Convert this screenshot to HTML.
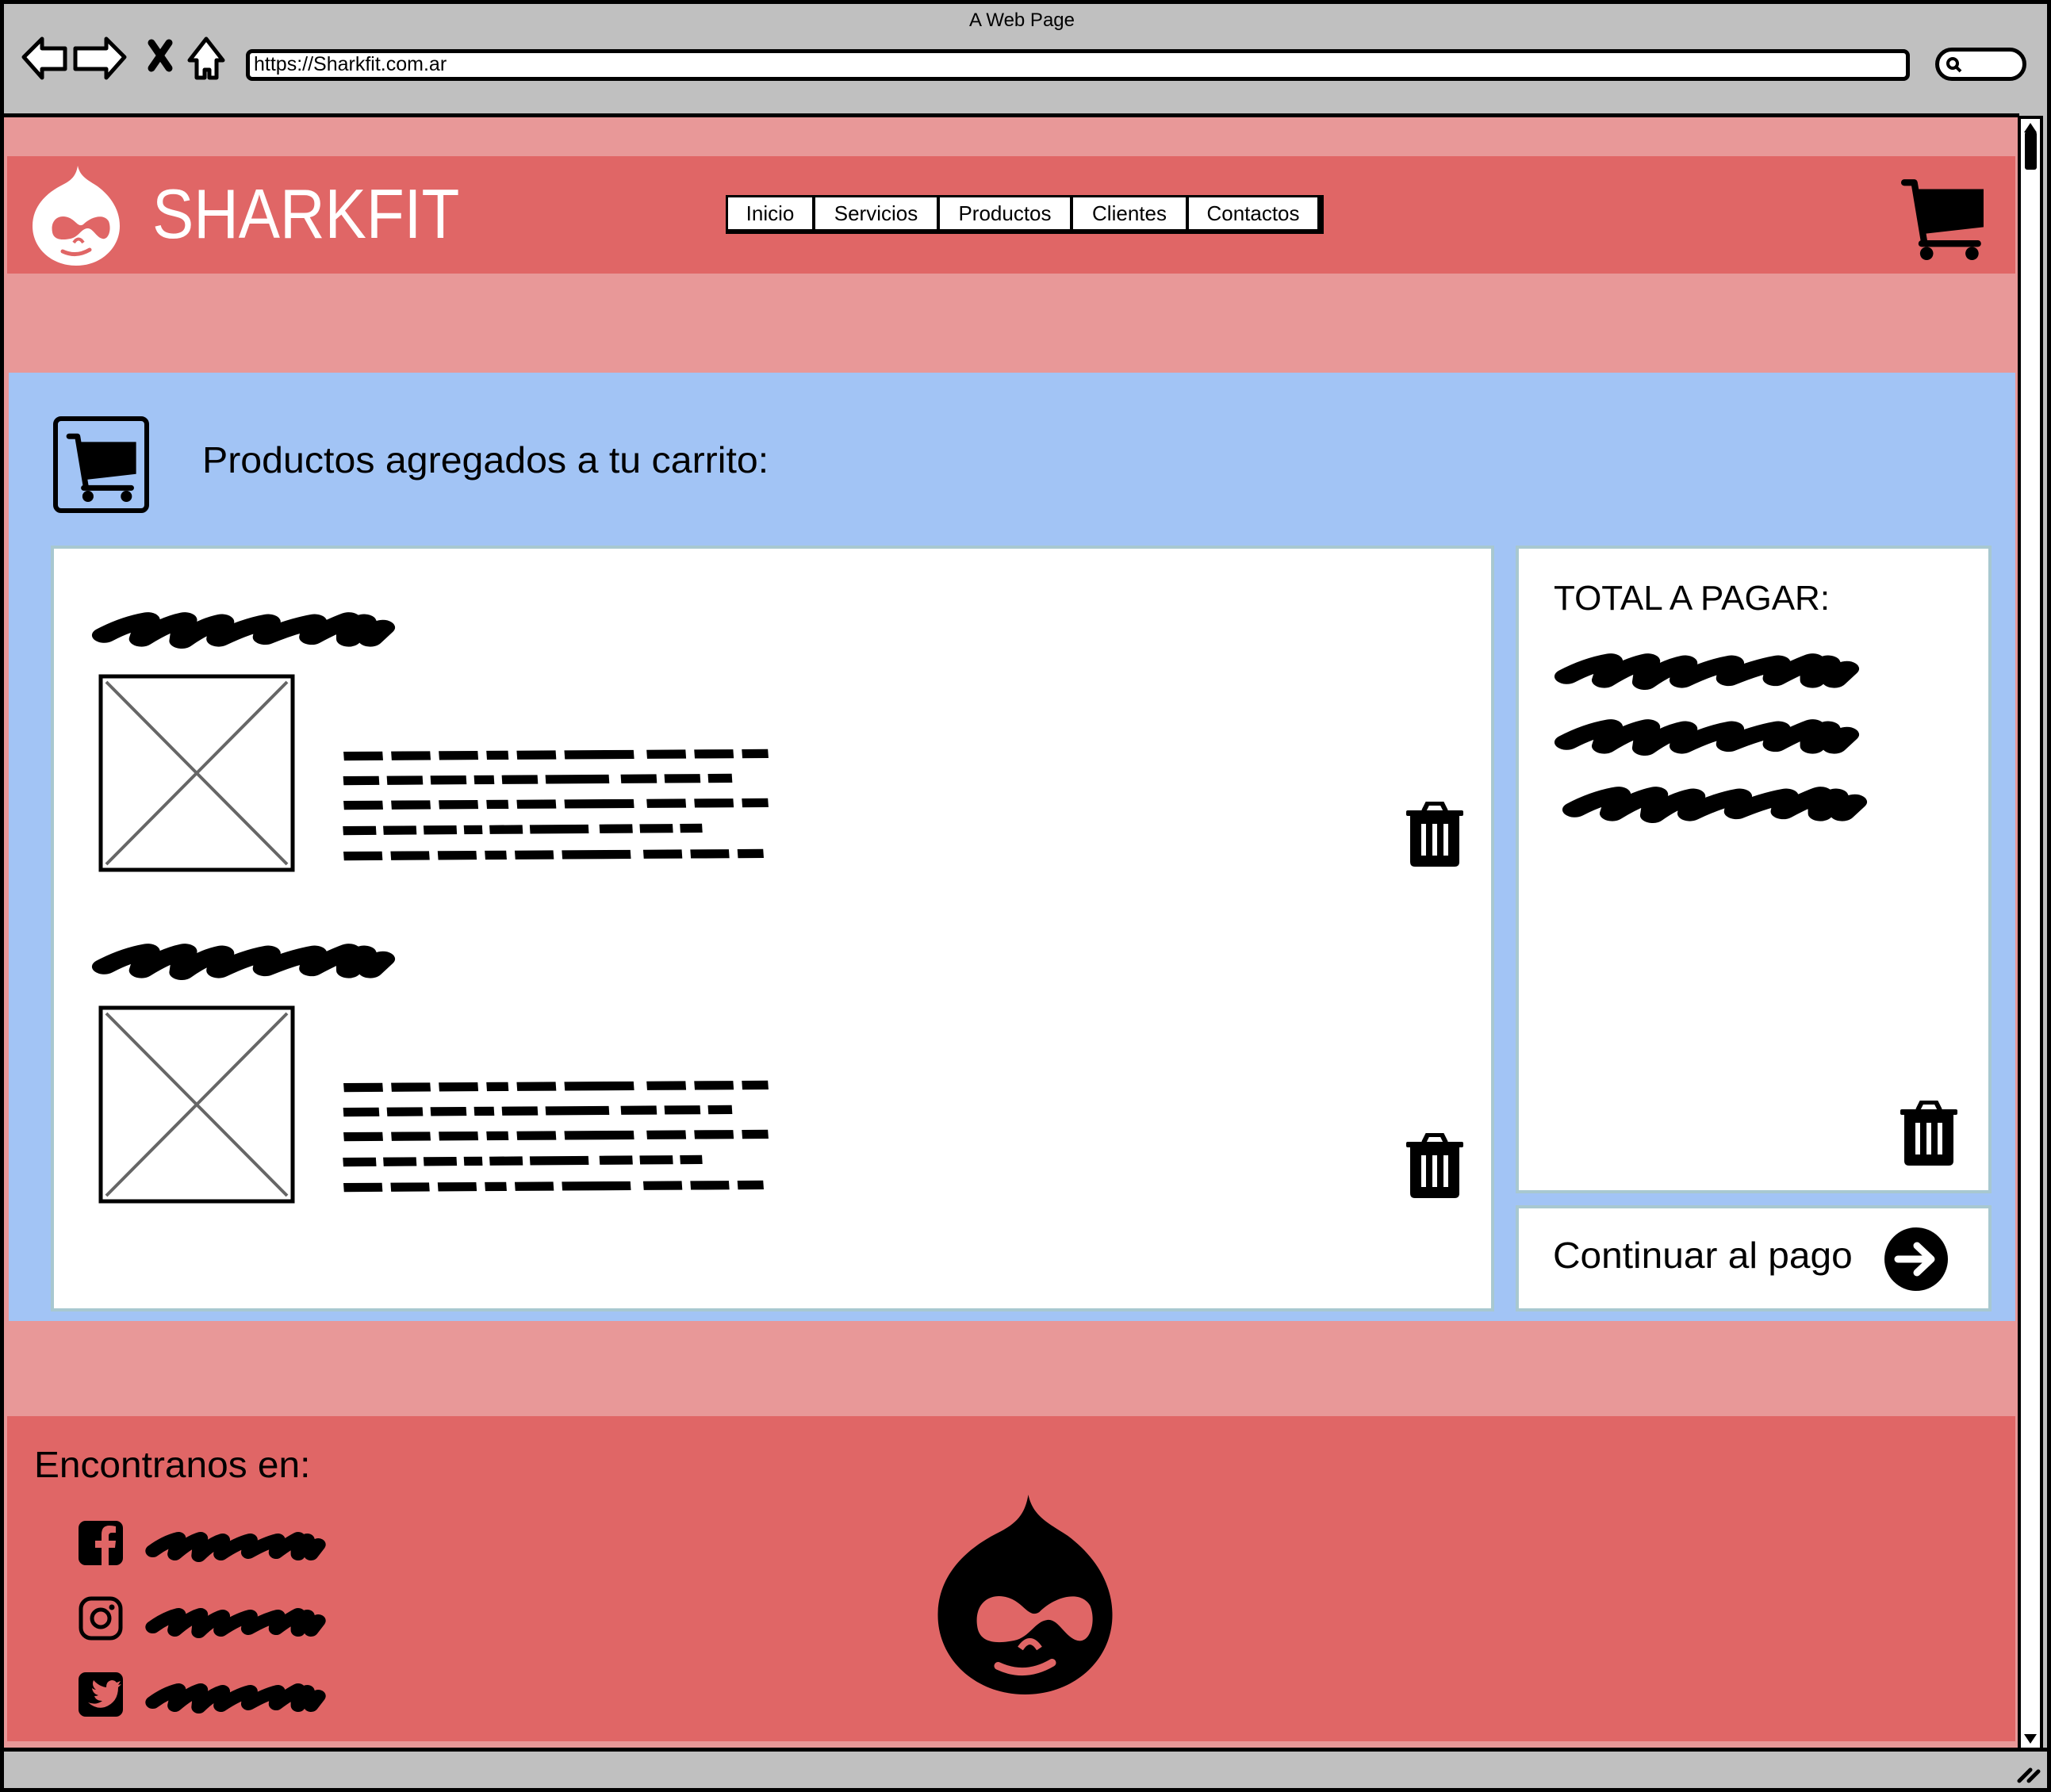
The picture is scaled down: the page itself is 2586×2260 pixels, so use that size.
<!DOCTYPE html>
<html><head><meta charset="utf-8">
<style>
*{margin:0;padding:0;box-sizing:border-box}
body{width:2586px;height:2260px;background:#fff;position:relative;overflow:hidden;font-family:"Liberation Sans",sans-serif;color:#000}
.a{position:absolute}
.t{position:absolute;white-space:nowrap;line-height:1}
</style></head><body>
<svg width="0" height="0" style="position:absolute">
<defs>
<symbol id="scr" viewBox="0 0 100 24" preserveAspectRatio="none">
<path d="M5,17 Q12,11 19,9 L17,19 Q25,11 31,9 L30,20 Q37,12 43,10 L42,19 Q51,12 58,10 L57,18 Q66,12 73,10 L72,18 Q79,12 84,9 L84,19 L89,10 L91,19 L95,13" fill="none" stroke="#000" stroke-width="8" stroke-linecap="round" stroke-linejoin="round"/>
</symbol>
<symbol id="line" viewBox="0 0 100 10" preserveAspectRatio="none">
<path d="M1,6 L99,4" fill="none" stroke="#000" stroke-width="7" stroke-dasharray="9 2 9 2 9 2 5 2 9 2 16 3"/>
</symbol>
<symbol id="cart" viewBox="0 0 100 100">
<path d="M3,6 H15 L27,78" fill="none" stroke="#000" stroke-width="8" stroke-linecap="round" stroke-linejoin="round"/>
<path d="M17,14 H99 V60 L28,68 Z" fill="#000"/>
<path d="M24,80 H92" stroke="#000" stroke-width="8" stroke-linecap="round"/>
<circle cx="30" cy="92" r="8"/><circle cx="85" cy="92" r="8"/>
</symbol>
<symbol id="trash" viewBox="0 0 72 82">
<path d="M22,12 L27,2 H45 L50,12" fill="none" stroke="#000" stroke-width="6" stroke-linejoin="round"/>
<rect x="0" y="11" width="72" height="7" rx="2"/>
<path d="M5,18 H67 V76 Q67,82 61,82 H11 Q5,82 5,76 Z"/>
<rect x="19" y="28" width="6" height="40" fill="#fff"/><rect x="33" y="28" width="6" height="40" fill="#fff"/><rect x="47" y="28" width="6" height="40" fill="#fff"/>
</symbol>
<symbol id="drop" viewBox="0 0 110 126">
<path d="M57,0 C60,14 70,18 82,26 C98,38 110,55 110,76 C110,104 86,126 55,126 C24,126 0,104 0,76 C0,48 22,32 38,24 C50,18 55,12 57,0Z"/>
</symbol>
</defs>
</svg>

<div class="a" style="left:0;top:0;width:2586px;height:2260px;border:5px solid #000;background:#c0c0c0"></div>
<div class="t" style="left:1222px;top:14px;font-size:24px">A Web Page</div>
<svg class="a" style="left:27px;top:46px" width="260" height="56" viewBox="0 0 260 56">
<path d="M3,26 L26,3 V15 H55 V41 H26 V52 Z" fill="#fff" stroke="#000" stroke-width="5" stroke-linejoin="round"/>
<path d="M130,26 L107,3 V15 H68 V41 H107 V52 Z" fill="#fff" stroke="#000" stroke-width="5" stroke-linejoin="round"/>
<path d="M164,8 L186,40 M186,8 L164,40" stroke="#000" stroke-width="9" stroke-linecap="round"/>
<path d="M233,3 L212,30 H221 V52 H231 V42 H237 V52 H246 V30 H254 Z" fill="#fff" stroke="#000" stroke-width="5" stroke-linejoin="round"/>
</svg>
<div class="a" style="left:310px;top:62px;width:2098px;height:40px;background:#fff;border:5px solid #000;border-radius:8px"></div>
<div class="t" style="left:320px;top:69px;font-size:25px">https://Sharkfit.com.ar</div>
<div class="a" style="left:2440px;top:60px;width:115px;height:42px;background:#fff;border:5px solid #000;border-radius:21px"></div>
<svg class="a" style="left:2452px;top:70px" width="24" height="24"><circle cx="10" cy="10" r="6" fill="none" stroke="#000" stroke-width="4"/><path d="M14,14 L20,20" stroke="#000" stroke-width="4"/></svg>

<div class="a" style="left:5px;top:143px;width:2541px;height:2063px;background:#e89898;border-top:5px solid #000"></div>
<div class="a" style="left:2544px;top:146px;width:32px;height:2062px;background:#fff;border:4px solid #000"></div>
<svg class="a" style="left:2548px;top:150px" width="24" height="22"><path d="M4,17 L12,5 L20,17Z"/></svg>
<div class="a" style="left:2553px;top:166px;width:15px;height:48px;background:#000;border-radius:3px"></div>
<svg class="a" style="left:2548px;top:2182px" width="24" height="22"><path d="M4,5 L12,17 L20,5Z"/></svg>
<div class="a" style="left:5px;top:2204px;width:2576px;height:5px;background:#000"></div>
<svg class="a" style="left:2540px;top:2220px" width="36" height="30"><path d="M6,26 L20,12 M18,26 L30,14" stroke="#000" stroke-width="5" stroke-linecap="round"/></svg>

<div class="a" style="left:9px;top:197px;width:2532px;height:148px;background:#e06666"></div>
<svg class="a" style="left:41px;top:209px" width="110" height="126" viewBox="0 0 110 126">
<use href="#drop" style="fill:#fff"/>
<path d="M25,84 C22,68 34,60 47,66 C55,70 58,78 64,74 C74,64 90,60 96,70 C100,80 96,94 88,92 C80,90 76,78 69,79 C61,80 58,90 48,92 C38,94 27,94 25,84Z" fill="#e06666"/>
<path d="M38,108 Q55,116 72,106" stroke="#e06666" stroke-width="5" fill="none" stroke-linecap="round"/>
<path d="M52,97 Q58,88 64,97" stroke="#e06666" stroke-width="4" fill="none"/>
</svg>
<div class="t" style="left:192px;top:226px;font-size:88px;color:#fff;transform:scaleX(0.89);transform-origin:0 0">SHARKFIT</div>
<div class="a" style="left:915px;top:246px;width:754px;height:49px;background:#000"></div>
<div class="a" style="left:918px;top:249px;width:743px;height:40px;display:flex;gap:4px;background:#000">
<div style="flex:0 0 106px;background:#fff;font-size:26px;text-align:center;line-height:40px">Inicio</div>
<div style="flex:0 0 153px;background:#fff;font-size:26px;text-align:center;line-height:40px">Servicios</div>
<div style="flex:0 0 164px;background:#fff;font-size:26px;text-align:center;line-height:40px">Productos</div>
<div style="flex:0 0 142px;background:#fff;font-size:26px;text-align:center;line-height:40px">Clientes</div>
<div style="flex:1;background:#fff;font-size:26px;text-align:center;line-height:40px">Contactos</div>
</div>
<svg class="a" style="left:2388px;top:224px" width="124" height="104"><use href="#cart"/></svg>

<div class="a" style="left:11px;top:470px;width:2530px;height:1196px;background:#a2c4f5"></div>
<div class="a" style="left:67px;top:525px;width:121px;height:122px;border:6px solid #000;border-radius:10px"></div>
<svg class="a" style="left:77px;top:545px" width="103" height="88"><use href="#cart"/></svg>
<div class="t" style="left:255px;top:557px;font-size:46px;transform:scaleX(1.05);transform-origin:0 0">Productos agregados a tu carrito:</div>

<div class="a" style="left:64px;top:688px;width:1820px;height:966px;background:#fff;border:4px solid #a8c8d0"></div>
<svg class="a" style="left:112px;top:760px" width="390" height="58"><use href="#scr"/></svg>
<svg class="a" style="left:124px;top:850px" width="248" height="250"><rect x="3" y="3" width="242" height="244" fill="#fff" stroke="#000" stroke-width="5"/><path d="M10,10 L238,240 M238,10 L10,240" stroke="#666" stroke-width="4"/></svg>
<svg class="a" style="left:428px;top:944px" width="546" height="16"><use href="#line"/></svg>
<svg class="a" style="left:428px;top:975px" width="500" height="16"><use href="#line"/></svg>
<svg class="a" style="left:428px;top:1006px" width="546" height="16"><use href="#line"/></svg>
<svg class="a" style="left:428px;top:1038px" width="462" height="16"><use href="#line"/></svg>
<svg class="a" style="left:428px;top:1070px" width="540" height="16"><use href="#line"/></svg>
<svg class="a" style="left:1773px;top:1011px" width="72" height="82"><use href="#trash"/></svg>

<svg class="a" style="left:112px;top:1178px" width="390" height="58"><use href="#scr"/></svg>
<svg class="a" style="left:124px;top:1268px" width="248" height="250"><rect x="3" y="3" width="242" height="244" fill="#fff" stroke="#000" stroke-width="5"/><path d="M10,10 L238,240 M238,10 L10,240" stroke="#666" stroke-width="4"/></svg>
<svg class="a" style="left:428px;top:1362px" width="546" height="16"><use href="#line"/></svg>
<svg class="a" style="left:428px;top:1393px" width="500" height="16"><use href="#line"/></svg>
<svg class="a" style="left:428px;top:1424px" width="546" height="16"><use href="#line"/></svg>
<svg class="a" style="left:428px;top:1456px" width="462" height="16"><use href="#line"/></svg>
<svg class="a" style="left:428px;top:1488px" width="540" height="16"><use href="#line"/></svg>
<svg class="a" style="left:1773px;top:1429px" width="72" height="82"><use href="#trash"/></svg>

<div class="a" style="left:1911px;top:688px;width:600px;height:817px;background:#fff;border:4px solid #a8c8d0"></div>
<div class="t" style="left:1959px;top:733px;font-size:44px">TOTAL A PAGAR:</div>
<svg class="a" style="left:1956px;top:812px" width="392" height="58"><use href="#scr"/></svg>
<svg class="a" style="left:1956px;top:895px" width="392" height="58"><use href="#scr"/></svg>
<svg class="a" style="left:1966px;top:980px" width="392" height="58"><use href="#scr"/></svg>
<svg class="a" style="left:2396px;top:1388px" width="72" height="82"><use href="#trash"/></svg>

<div class="a" style="left:1911px;top:1520px;width:600px;height:134px;background:#fff;border:4px solid #a8c8d0"></div>
<div class="t" style="left:1958px;top:1560px;font-size:46px;transform:scaleX(1.04);transform-origin:0 0">Continuar al pago</div>
<svg class="a" style="left:2375px;top:1547px" width="82" height="82" viewBox="0 0 82 82"><ellipse cx="41" cy="41" rx="40" ry="40"/><path d="M18,41 H56 M42,24 L60,41 L42,58" stroke="#fff" stroke-width="9" fill="none" stroke-linecap="round" stroke-linejoin="round"/></svg>

<div class="a" style="left:9px;top:1786px;width:2532px;height:410px;background:#e06666"></div>
<div class="t" style="left:43px;top:1824px;font-size:46px;transform:scaleX(1.04);transform-origin:0 0">Encontranos en:</div>
<svg class="a" style="left:99px;top:1918px" width="56" height="56" viewBox="0 0 56 56"><rect width="56" height="56" rx="9"/><path d="M38,56 V34 H46 L47,25 H38 V19 Q38,15 42,15 H47 V7 Q43,6 39,6 Q29,6 29,17 V25 H21 V34 H29 V56Z" fill="#e06666"/></svg>
<svg class="a" style="left:99px;top:2013px" width="56" height="56" viewBox="0 0 56 56"><rect x="3" y="3" width="50" height="50" rx="13" fill="none" stroke="#000" stroke-width="5"/><circle cx="28" cy="28" r="11" fill="none" stroke="#000" stroke-width="5"/><circle cx="42" cy="14" r="3.5"/></svg>
<svg class="a" style="left:99px;top:2109px" width="56" height="56" viewBox="0 0 56 56"><rect width="56" height="56" rx="9"/><path d="M12,38 Q22,42 30,36 Q22,36 20,30 Q23,30 25,29 Q18,27 17,20 Q20,22 22,22 Q16,17 19,10 Q26,18 35,19 Q35,11 42,10 Q46,10 48,13 L53,11 L50,16 L54,15 L50,19 Q50,38 33,44 Q22,47 12,38Z" fill="#e06666"/></svg>
<svg class="a" style="left:181px;top:1922px" width="232" height="48"><use href="#scr"/></svg>
<svg class="a" style="left:181px;top:2018px" width="232" height="48"><use href="#scr"/></svg>
<svg class="a" style="left:181px;top:2113px" width="232" height="48"><use href="#scr"/></svg>
<svg class="a" style="left:1182px;top:1885px" width="221" height="252" viewBox="0 0 110 126">
<use href="#drop"/>
<path d="M25,84 C22,68 34,60 47,66 C55,70 58,78 64,74 C74,64 90,60 96,70 C100,80 96,94 88,92 C80,90 76,78 69,79 C61,80 58,90 48,92 C38,94 27,94 25,84Z" fill="#e06666"/>
<path d="M38,108 Q55,116 72,106" stroke="#e06666" stroke-width="5" fill="none" stroke-linecap="round"/>
<path d="M52,97 Q58,88 64,97" stroke="#e06666" stroke-width="4" fill="none"/>
</svg>
</body></html>
